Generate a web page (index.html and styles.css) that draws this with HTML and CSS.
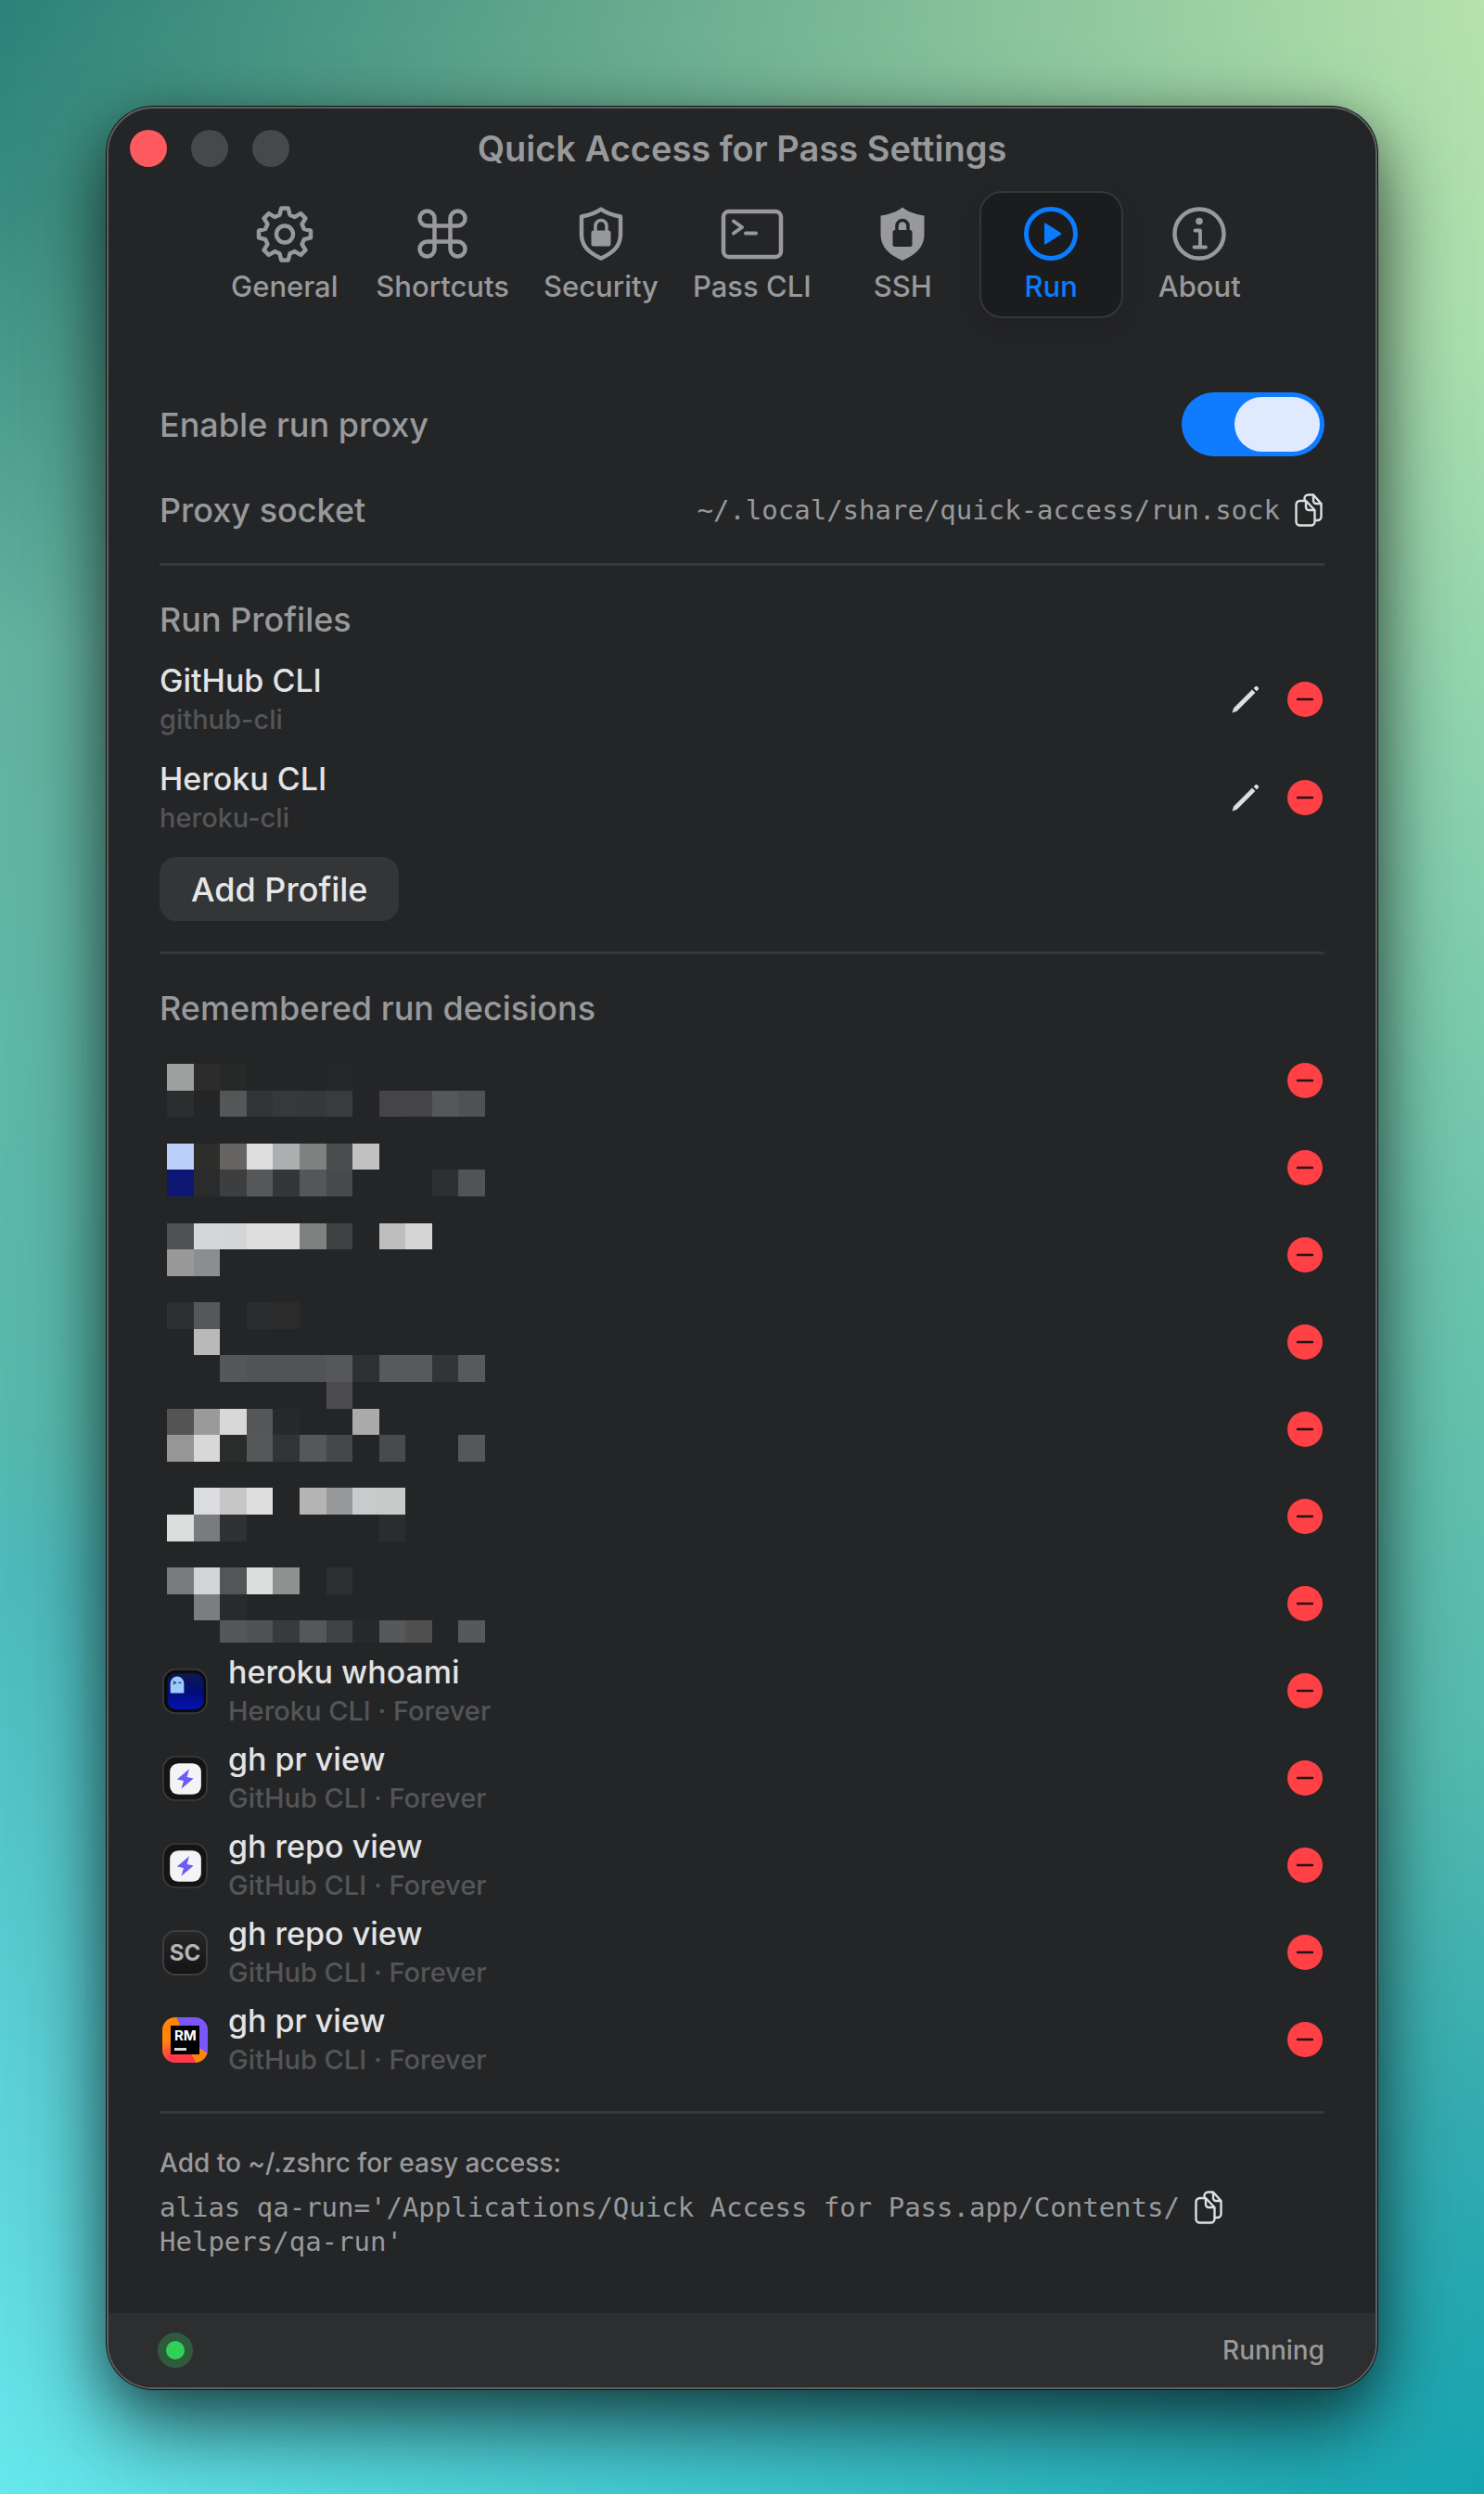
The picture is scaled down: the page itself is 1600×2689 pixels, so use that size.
FILE: index.html
```
<!DOCTYPE html>
<html lang="en">
<head>
    <meta charset="UTF-8">
    <meta name="viewport" content="width=device-width, initial-scale=1.0">
    <title>Quick Access for Pass Settings</title>
    <link rel="stylesheet" href="styles.css">
</head>
<body>
    <!-- Shared icons -->
    <svg class="sprite" aria-hidden="true">
        <symbol id="icon-copy" viewBox="0 0 30 36">
            <path d="M10.500 8V5.500a4 4 0 0 1 4-4H20L28.500 11V25a4 4 0 0 1-4 4H22M20 2v6a3 3 0 0 0 3 3h5M5.500 8H12l9.500 10v12.500a4 4 0 0 1-4 4h-12a4 4 0 0 1-4-4V12a4 4 0 0 1 4-4zM12 8.500V15a3 3 0 0 0 3 3h6" fill="none" stroke="currentColor" stroke-width="2.400" stroke-linejoin="round"/>
        </symbol>
        <symbol id="icon-pencil" viewBox="0 0 30 30">
            <path d="M.8 29.200l1.700-5L22 4.700l3.200 3.200L5.700 27.400z" fill="currentColor" stroke="currentColor" stroke-width=".5" stroke-linejoin="round"/>
            <path d="M23.600 3.100l1.600-1.700a1.800 1.800 0 0 1 2.600 0l.7.700a1.800 1.800 0 0 1 0 2.600L26.800 6.300z" fill="currentColor"/>
        </symbol>
        <symbol id="icon-minus" viewBox="0 0 38 38">
            <circle cx="19" cy="19" r="19" fill="#ff4045"/>
            <path d="M11 19h16" stroke="#1f1416" stroke-width="2.400" stroke-linecap="round"/>
        </symbol>
        <symbol id="icon-bolt" viewBox="0 0 48 48">
            <rect x="1" y="1" width="46" height="46" rx="13" fill="#141415" stroke="#3c3d3e" stroke-width="1.500"/>
            <rect x="8" y="8" width="33" height="33" rx="9" fill="#f4f4f6"/>
            <path d="M28.500 14L15.500 25l7 1.500L20 35l13-11-7-1.500z" fill="#6a5cf5"/>
        </symbol>
    </svg>

    <main class="window">
        <header class="titlebar">
            <div class="lights">
                <button class="light close" aria-label="Close"></button>
                <button class="light" aria-label="Minimize"></button>
                <button class="light" aria-label="Zoom"></button>
            </div>
            <h1>Quick Access for Pass Settings</h1>
        </header>

        <nav class="tabs">
            <button class="tab">
                <svg viewBox="0 0 62 62" fill="none" stroke="currentColor" stroke-width="4.500" stroke-linejoin="round">
                    <path d="M27.300 3.500h7.400l1.900 7.200 5.200 2.200 6.400-3.800 5.200 5.200-3.800 6.400 2.200 5.200 7.200 1.900v7.400l-7.200 1.900-2.200 5.200 3.800 6.400-5.200 5.200-6.400-3.800-5.200 2.200-1.900 7.200h-7.400l-1.900-7.200-5.200-2.200-6.400 3.800-5.200-5.200 3.800-6.400-2.200-5.200-7.200-1.900v-7.400l7.200-1.900 2.200-5.200-3.800-6.400 5.200-5.200 6.400 3.800 5.200-2.200z"/>
                    <circle cx="31" cy="31.500" r="9"/>
                </svg>
                <span>General</span>
            </button>
            <button class="tab">
                <svg viewBox="0 0 62 62" fill="none" stroke="currentColor" stroke-width="4.500">
                    <path d="M22.500 22.500v-8a8 8 0 1 0-8 8h33a8 8 0 1 0-8-8v33a8 8 0 1 0 8-8h-33a8 8 0 1 0 8 8z"/>
                </svg>
                <span>Shortcuts</span>
            </button>
            <button class="tab">
                <svg viewBox="0 0 62 62" fill="none" stroke="currentColor" stroke-width="4.500" stroke-linejoin="round">
                    <path d="M31 4.500c6 4.500 12 6.500 21 8v19c0 13-8 20-21 26-13-6-21-13-21-26v-19C19 11 25 9 31 4.500z"/>
                    <path d="M25 29v-6.500a6 6 0 0 1 12 0V29" stroke-width="3.500"/>
                    <rect x="20.500" y="27.500" width="21" height="17" rx="2.500" fill="currentColor" stroke="none"/>
                </svg>
                <span>Security</span>
            </button>
            <button class="tab">
                <svg class="wide" viewBox="0 0 68 62" fill="none" stroke="currentColor" stroke-width="4.500" stroke-linecap="round" stroke-linejoin="round">
                    <rect x="3" y="7" width="62" height="49" rx="6"/>
                    <path d="M14 17.500l9 6.500-9 6.500M27 30.500h11" stroke-width="4"/>
                </svg>
                <span>Pass CLI</span>
            </button>
            <button class="tab">
                <svg viewBox="0 0 62 62">
                    <path fill="currentColor" d="M31 2.500c6 5 14 7.500 23.500 9v20c0 14-9 22-23.500 28.500C16.500 53.500 7.500 45.500 7.500 31.500v-20C17 10 25 7.500 31 2.500z"/>
                    <path d="M25 29v-6.500a6 6 0 0 1 12 0V29" fill="none" stroke="#242527" stroke-width="3.500"/>
                    <rect x="20.500" y="27" width="21" height="18" rx="2.500" fill="#242527"/>
                </svg>
                <span>SSH</span>
            </button>
            <button class="tab active">
                <svg viewBox="0 0 62 62">
                    <circle cx="31" cy="31" r="26.500" fill="none" stroke="currentColor" stroke-width="5"/>
                    <path d="M24 20.500v21a1 1 0 0 0 1.600.8l16-10.300a1.200 1.200 0 0 0 0-2l-16-10.300a1 1 0 0 0-1.600.8z" fill="currentColor"/>
                </svg>
                <span>Run</span>
            </button>
            <button class="tab">
                <svg viewBox="0 0 62 62" fill="none" stroke="currentColor" stroke-width="4.500" stroke-linecap="round" stroke-linejoin="round">
                    <circle cx="31" cy="31" r="26.500"/>
                    <circle cx="31" cy="17.500" r="3.800" fill="currentColor" stroke="none"/>
                    <path d="M26.500 27.500H32V45M25.500 45.500h12.500" stroke-width="3.800"/>
                </svg>
                <span>About</span>
            </button>
        </nav>

        <section class="content">
            <div class="row proxy-row">
                <label for="runProxy">Enable run proxy</label>
                <input type="checkbox" id="runProxy" class="switch" checked>
            </div>
            <div class="row socket-row">
                <span>Proxy socket</span>
                <div class="path">
                    <code>~/.local/share/quick-access/run.sock</code>
                    <button class="icon-btn" aria-label="Copy socket path"><svg class="copy"><use href="#icon-copy"/></svg></button>
                </div>
            </div>
            <hr>

            <h2>Run Profiles</h2>
            <ul class="profiles">
                <li>
                    <div class="info">
                        <strong>GitHub CLI</strong>
                        <small>github-cli</small>
                    </div>
                    <button class="icon-btn" aria-label="Edit GitHub CLI"><svg class="pencil"><use href="#icon-pencil"/></svg></button>
                    <button class="icon-btn" aria-label="Remove GitHub CLI"><svg class="minus"><use href="#icon-minus"/></svg></button>
                </li>
                <li>
                    <div class="info">
                        <strong>Heroku CLI</strong>
                        <small>heroku-cli</small>
                    </div>
                    <button class="icon-btn" aria-label="Edit Heroku CLI"><svg class="pencil"><use href="#icon-pencil"/></svg></button>
                    <button class="icon-btn" aria-label="Remove Heroku CLI"><svg class="minus"><use href="#icon-minus"/></svg></button>
                </li>
            </ul>
            <button class="add-btn">Add Profile</button>
            <hr>

            <h2>Remembered run decisions</h2>
            <div class="decisions-wrap">
                <ul class="decisions">
                    <li><button class="icon-btn" aria-label="Remove decision"><svg class="minus"><use href="#icon-minus"/></svg></button></li>
                    <li><button class="icon-btn" aria-label="Remove decision"><svg class="minus"><use href="#icon-minus"/></svg></button></li>
                    <li><button class="icon-btn" aria-label="Remove decision"><svg class="minus"><use href="#icon-minus"/></svg></button></li>
                    <li><button class="icon-btn" aria-label="Remove decision"><svg class="minus"><use href="#icon-minus"/></svg></button></li>
                    <li><button class="icon-btn" aria-label="Remove decision"><svg class="minus"><use href="#icon-minus"/></svg></button></li>
                    <li><button class="icon-btn" aria-label="Remove decision"><svg class="minus"><use href="#icon-minus"/></svg></button></li>
                    <li><button class="icon-btn" aria-label="Remove decision"><svg class="minus"><use href="#icon-minus"/></svg></button></li>
                    <li>
                        <svg class="app" viewBox="0 0 48 48">
                            <defs>
                                <linearGradient id="screen" x1="0" y1="0" x2="0" y2="1">
                                    <stop offset="0" stop-color="#0c1a4c"/>
                                    <stop offset=".5" stop-color="#040c78"/>
                                    <stop offset="1" stop-color="#0512b4"/>
                                </linearGradient>
                            </defs>
                            <rect x="1" y="1" width="46" height="46" rx="13" fill="#0b0b0d" stroke="#3c3d3e" stroke-width="1.500"/>
                            <rect x="5.500" y="5" width="38" height="38" rx="9" fill="url(#screen)"/>
                            <path d="M8.500 26V15.500a7.200 7.200 0 0 1 14.400 0V26z" fill="#9dcbff"/>
                            <path d="M11.500 13.500l2.500 1.500-2.500 1.500M17 15h3" stroke="#24406e" stroke-width="1.300" fill="none"/>
                        </svg>
                        <div class="info">
                            <strong>heroku whoami</strong>
                            <small>Heroku CLI · Forever</small>
                        </div>
                        <button class="icon-btn" aria-label="Remove decision"><svg class="minus"><use href="#icon-minus"/></svg></button>
                    </li>
                    <li>
                        <svg class="app"><use href="#icon-bolt"/></svg>
                        <div class="info">
                            <strong>gh pr view</strong>
                            <small>GitHub CLI · Forever</small>
                        </div>
                        <button class="icon-btn" aria-label="Remove decision"><svg class="minus"><use href="#icon-minus"/></svg></button>
                    </li>
                    <li>
                        <svg class="app"><use href="#icon-bolt"/></svg>
                        <div class="info">
                            <strong>gh repo view</strong>
                            <small>GitHub CLI · Forever</small>
                        </div>
                        <button class="icon-btn" aria-label="Remove decision"><svg class="minus"><use href="#icon-minus"/></svg></button>
                    </li>
                    <li>
                        <div class="app app-sc">SC</div>
                        <div class="info">
                            <strong>gh repo view</strong>
                            <small>GitHub CLI · Forever</small>
                        </div>
                        <button class="icon-btn" aria-label="Remove decision"><svg class="minus"><use href="#icon-minus"/></svg></button>
                    </li>
                    <li>
                        <div class="app app-rm"><span>RM</span></div>
                        <div class="info">
                            <strong>gh pr view</strong>
                            <small>GitHub CLI · Forever</small>
                        </div>
                        <button class="icon-btn" aria-label="Remove decision"><svg class="minus"><use href="#icon-minus"/></svg></button>
                    </li>
                </ul>
                <!-- Private entries are hidden behind this mosaic -->
                <svg class="mosaic" id="mosaic" viewBox="0 0 343 624" aria-hidden="true"></svg>
            </div>
            <hr>

            <p class="hint">Add to ~/.zshrc for easy access:</p>
            <div class="alias">
                <code>alias qa-run='/Applications/Quick Access for Pass.app/Contents/<br>Helpers/qa-run'</code>
                <button class="icon-btn" aria-label="Copy alias"><svg class="copy"><use href="#icon-copy"/></svg></button>
            </div>
        </section>

        <footer>
            <span class="status-dot"></span>
            <span>Running</span>
        </footer>
    </main>

    <script>
        // one line per mosaic row, "column:colour"
        const rows = [
            '0:9e9f9f 1:2d2c2c 2:272828 6:262728',
            '0:2c2d2e 2:555657 3:323335 4:373839 5:363738 6:3a3b3c 8:454547 9:454446 10:565759 11:505152',
            '',
            '0:bacffa 1:2d2d2c 2:666463 3:dedede 4:adaeaf 5:7f8080 6:4b4c4e 7:c1c1c1',
            '0:0d1773 1:2a2b2c 2:3d3e3f 3:565859 4:353637 5:545657 6:48494a 10:2e2f30 11:525354',
            '',
            '0:505152 1:d5d6d8 2:d4d5d7 3:dedede 4:dedede 5:7f8080 6:3f4041 8:bdbdbd 9:d5d5d5',
            '0:999999 1:8c8d8f',
            '',
            '0:2e2f30 1:565758 3:2b2c2d 4:2b2b2c',
            '1:b9b9b9',
            '2:555658 3:525354 4:525354 5:525355 6:555758 7:2f3031 8:58595b 9:58595b 10:333435 11:58595b',
            '6:4c4b4d',
            '0:545453 1:9b9a9a 2:d8d8d8 3:555658 4:28292a 7:ababab',
            '0:969696 1:d8d8d8 2:2a2b2b 3:555758 4:323335 5:565759 6:464749 8:484a4c 11:565759',
            '',
            '1:dadcdf 2:c6c6c6 3:dfdfdf 5:b3b4b3 6:97989a 7:c9cacb 8:c8c9c9',
            '0:dcdddd 1:7a7b7c 2:303132 8:2b2c2d',
            '',
            '0:7a7b7d 1:d3d4d6 2:545556 3:dcdddd 4:8f9090 6:2e2f30',
            '1:7c7d7e 2:282b2c',
            '2:555658 3:505152 4:393a3b 5:555758 6:414243 7:262a2b 8:57585a 9:505051 11:57585a'
        ];
        const size = 343 / 12;
        const mosaic = document.getElementById('mosaic');
        rows.forEach((row, y) => {
            row.split(' ').filter(Boolean).forEach(cell => {
                const [x, colour] = cell.split(':');
                const rect = document.createElementNS('http://www.w3.org/2000/svg', 'rect');
                rect.setAttribute('x', x * size);
                rect.setAttribute('y', y * size);
                rect.setAttribute('width', size);
                rect.setAttribute('height', size);
                rect.setAttribute('fill', '#' + colour);
                mosaic.appendChild(rect);
            });
        });
    </script>
</body>
</html>
```
FILE: styles.css
```
* { box-sizing: border-box; }
body {
    margin: 0;
    padding: 115px;
    min-height: 100vh;
    position: relative;
    font-family: Inter, "Liberation Sans", sans-serif;
    font-weight: 500;
    color: #98999b;
    background: linear-gradient(#2c8279 0%, #388c80 8%, #63b2a0 26%, #5fb8a8 42%, #57b9ad 57%, #4dbabc 63%, #5ed4da 86%, #68e8ec 100%);
}
/* right-hand colours fade in over the left-hand ones */
body::before {
    content: "";
    position: absolute;
    inset: 0;
    background: linear-gradient(#b6e2ac 0%, #abdfae 14%, #8ed3ae 30%, #6cc4ac 50%, #55baae 70%, #33abb0 85%, #15a4b0 100%);
    -webkit-mask-image: linear-gradient(to right, transparent, #000);
    mask-image: linear-gradient(to right, transparent, #000);
}
h1, h2, p, ul { margin: 0; padding: 0; }
ul { list-style: none; }
button {
    font: inherit;
    color: inherit;
    background: none;
    border: 0;
    padding: 0;
}
svg { display: block; }
.sprite { position: absolute; width: 0; height: 0; }

.window {
    position: relative;
    border: 2px solid #5e6062;
    border-radius: 50px;
    background: #242527;
    overflow: hidden;
    box-shadow: 0 0 0 1px #101516, 0 40px 90px rgba(0, 0, 0, 0.6), 0 10px 50px rgba(0, 0, 0, 0.25);
}

.titlebar {
    display: grid;
    grid-template-columns: 1fr auto 1fr;
    align-items: center;
    height: 86px;
    padding: 0 23px;
}
.titlebar h1 { font-size: 38px; line-height: 44px; font-weight: 600; }
.lights { display: flex; gap: 26px; }
.light { width: 40px; height: 40px; border-radius: 50%; background: #47484a; }
.light.close { background: #ff5a5f; }

.tabs {
    display: flex;
    justify-content: center;
    gap: 5px;
    margin-top: 3px;
}
.tab {
    display: flex;
    flex-direction: column;
    align-items: center;
    gap: 6px;
    min-width: 155px;
    height: 137px;
    padding: 13px 14px;
    border: 2px solid transparent;
    border-radius: 24px;
    font-size: 31px;
    line-height: 40px;
}
.tab svg { width: 62px; height: 62px; flex: none; }
.tab svg.wide { width: 68px; }
.tab.active {
    color: #0a7cff;
    background: #1b1c1d;
    border-color: #353638;
    box-shadow: 0 8px 24px rgba(0, 0, 0, 0.12);
}

.content { padding: 80px 55px 58px; }
.row {
    display: flex;
    justify-content: space-between;
    align-items: center;
    font-size: 36px;
    line-height: 48px;
}
.socket-row { margin: 34px 0 33px; }
.switch {
    appearance: none;
    display: flex;
    justify-content: flex-end;
    width: 154px;
    height: 69px;
    margin: 0;
    padding: 5px;
    border-radius: 35px;
    background: #0f7bff;
}
.switch::before {
    content: "";
    width: 92px;
    height: 59px;
    border-radius: 30px;
    background: #dfeaff;
}
.path { display: flex; align-items: center; gap: 16px; padding-right: 2px; }
code {
    font-family: "DejaVu Sans Mono", "Liberation Mono", monospace;
    font-size: 29px;
    line-height: 37px;
}
.icon-btn { flex: none; color: #dedfe0; }
.copy { width: 30px; height: 36px; }
.pencil { width: 30px; height: 30px; }
.minus { width: 38px; height: 38px; }

hr {
    height: 3px;
    margin: 30px 0 33px;
    border: 0;
    background: #37383a;
}
h2 { margin-top: 35px; font-size: 36px; line-height: 46px; font-weight: 500; }

.profiles {
    display: grid;
    gap: 22px;
    margin-top: 21px;
}
.profiles li { display: flex; align-items: center; gap: 30px; padding-right: 2px; }
.info { flex: 1; }
.info strong {
    display: block;
    font-size: 34px;
    line-height: 44px;
    font-weight: 500;
    color: #e2e3e4;
}
.info small {
    display: block;
    font-size: 29px;
    line-height: 40px;
    color: #545557;
}
.add-btn {
    display: block;
    height: 69px;
    margin: 22px 0 33px;
    padding: 0 34px;
    border-radius: 18px;
    background: #343537;
    color: #e6e7e8;
    font-size: 36px;
}

.decisions-wrap { position: relative; margin-top: 8px; }
.decisions li {
    display: flex;
    align-items: center;
    justify-content: flex-end;
    height: 94px;
    padding: 0 2px 0 3px;
}
.app { width: 49px; height: 49px; margin-right: 22px; flex: none; }
.app-sc {
    display: grid;
    place-items: center;
    border: 2px solid #3c3d3e;
    border-radius: 14px;
    background: linear-gradient(#262627, #141415);
    color: #b4b4b4;
    font-size: 24px;
    font-weight: 700;
}
.app-rm {
    padding: 9px;
    border-radius: 14px;
    background: conic-gradient(#7a57fb 0 120deg, #ff8408 120deg 155deg, #ff3a4a 155deg 220deg, #ff8408 265deg 340deg, #7a57fb 340deg);
}
.app-rm span {
    display: block;
    height: 31px;
    padding: 3px 4px;
    background: #000;
    color: #fff;
    font-size: 15px;
    line-height: 16px;
    font-weight: 700;
}
.app-rm span::after {
    content: "";
    display: block;
    width: 13px;
    height: 3px;
    margin-top: 5px;
    background: #d8d8d8;
}
.mosaic {
    position: absolute;
    left: 8px;
    top: 29px;
    width: 343px;
    height: 624px;
    shape-rendering: crispEdges;
    pointer-events: none;
}

.hint { font-size: 28px; line-height: 40px; }
.alias {
    display: flex;
    align-items: flex-start;
    gap: 16px;
    margin-top: 10px;
}

footer {
    display: flex;
    justify-content: space-between;
    align-items: center;
    height: 80px;
    padding: 0 55px 0 53px;
    background: #2d2e30;
    font-size: 28px;
}
.status-dot {
    width: 38px;
    height: 38px;
    border: 9px solid #2f5a3b;
    border-radius: 50%;
    background: #30d158;
}
```
